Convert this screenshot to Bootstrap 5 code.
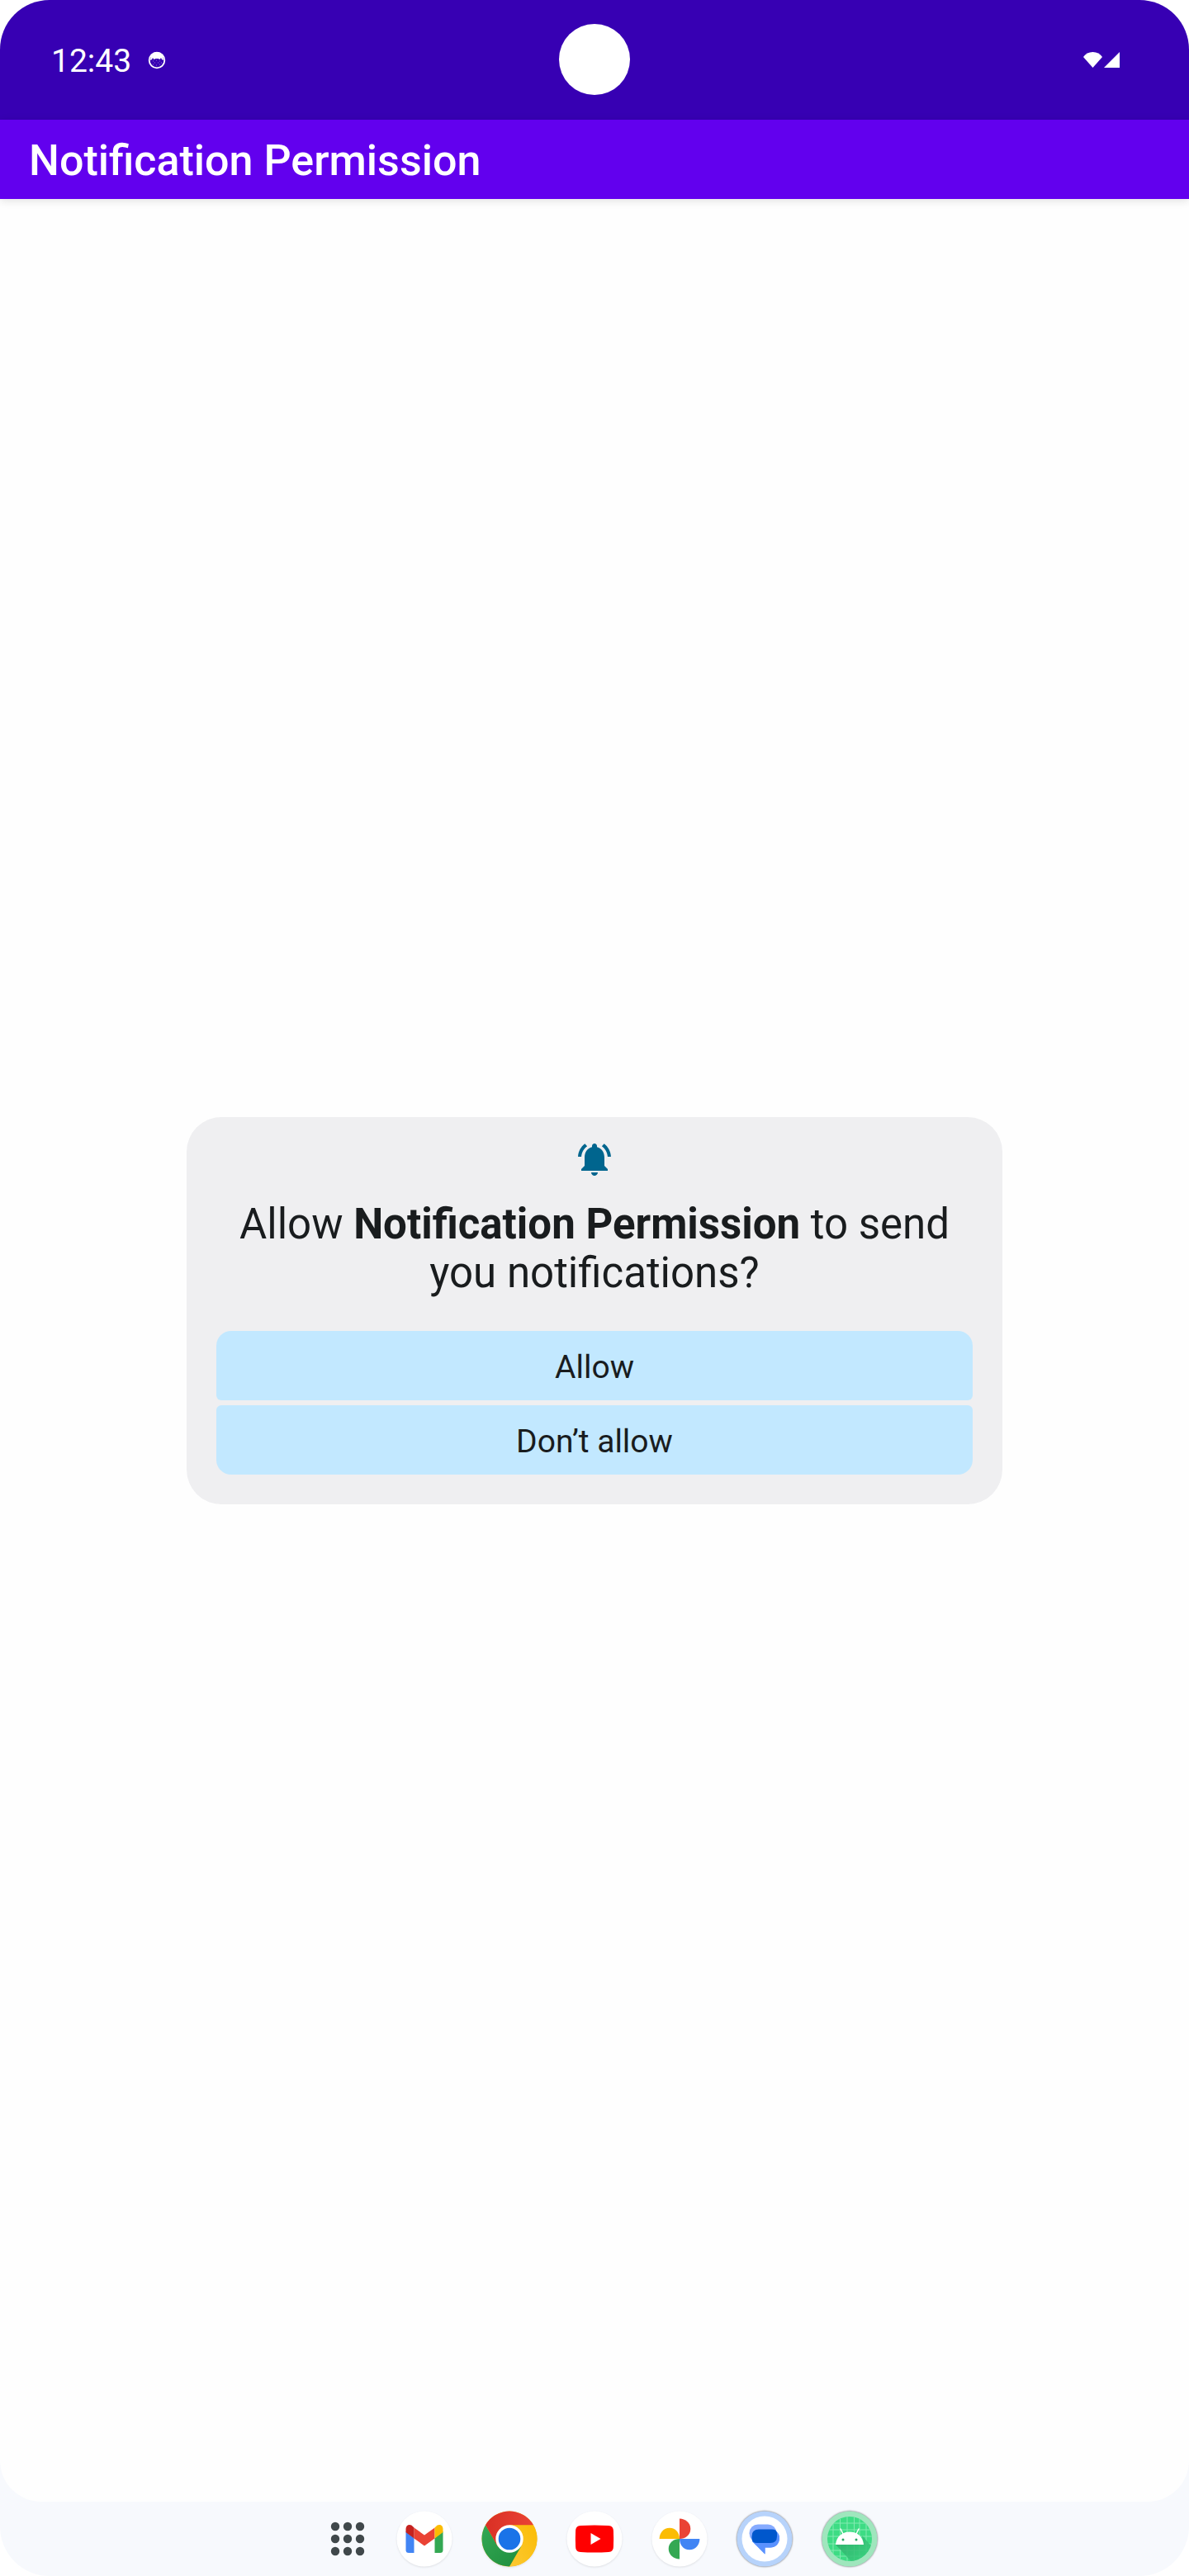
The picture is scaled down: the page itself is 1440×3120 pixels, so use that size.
<!DOCTYPE html>
<html lang="en">
<head>
<meta charset="utf-8">
<meta name="viewport" content="width=device-width, initial-scale=1">
<title>Notification Permission</title>
<link href="https://cdn.jsdelivr.net/npm/bootstrap@5.3.0/dist/css/bootstrap.min.css" rel="stylesheet">
<style>
body { font-family: Roboto, "Noto Sans", sans-serif; background: #fff; }
.device { background: #f7f9fd; border-radius: 60px; overflow: hidden; }
.status-bar { background: #3700b3; height: 145px; padding: 0 82px 0 62px; font-size: 39px; line-height: 48px; }
.status-bar time { padding-top: 3px; }
.camera { width: 86px; height: 86px; top: 29px; }
.app-window { background: #fefefe; border-radius: 0 0 50px 50px; }
.app-bar { background: #6200ee; height: 96px; padding: 4px 35px 0; box-shadow: 0 2px 10px rgba(0, 0, 0, .12); }
.app-title { font-size: 52px; line-height: 60px; font-weight: 500; }
.permission { width: 100%; max-width: 988px; padding: 27px 36px 36px; border-radius: 42px; background: #efeff1; color: #191c1e; }
.question { font-size: 51px; line-height: 59px; margin: 25px 0 41px; font-weight: 400; }
.choices { gap: 6px; }
.btn-choice { --bs-btn-color: #191c1e; --bs-btn-bg: #c2e8ff; --bs-btn-hover-bg: #b1ddf7; --bs-btn-border-width: 0; height: 84px; padding: 3px 0 0; font-size: 39px; line-height: 48px; border-radius: 6px; }
.btn-choice:first-child { border-radius: 18px 18px 6px 6px; }
.btn-choice:last-child { border-radius: 6px 6px 18px 18px; }
.dock { height: 90px; gap: 35px; }
.dock svg { display: block; overflow: visible; }
.disc { filter: drop-shadow(0 1px 1px rgba(0, 0, 0, .1)); }
.ring { filter: drop-shadow(0 0 1px rgba(0, 0, 0, .6)); }
</style>
</head>
<body>
<div class="device min-vh-100 d-flex flex-column">
  <header class="status-bar position-relative d-flex align-items-center justify-content-between text-white">
    <div class="d-flex align-items-center gap-3">
      <time datetime="12:43">12:43</time>
      <svg width="30" height="24" viewBox="0 0 30 24" aria-hidden="true">
        <circle cx="15" cy="12" r="9.3" fill="none" stroke="#fff" stroke-width="1.8"/>
        <path d="M7.500 7Q10 2 15 2t7.500 5l.5 5-2-1-1-2-1.500 2-2-1h-3l-2 1L10 9l-1 2-2 1z" fill="#fff"/>
        <path d="M10 13h1M14 12h1M18 13h1M12 15h1M16 15h1M20 15h1M10 17h1M14 18h1M18 17h1" stroke="#8e70d5" stroke-width="1"/>
      </svg>
    </div>
    <div class="camera position-absolute start-50 translate-middle-x rounded-circle bg-white"></div>
    <svg width="46" height="20" viewBox="0 0 46 20" fill="#fff" role="img" aria-label="Wi-Fi and signal">
      <path d="M0 6Q4 0 11.500 0T23 6L11.500 19z"/>
      <path d="M44 0v19H25z"/>
    </svg>
  </header>
  <main class="app-window position-relative flex-grow-1">
    <div class="app-bar d-flex align-items-center text-white">
      <h1 class="app-title m-0">Notification Permission</h1>
    </div>
    <div class="position-absolute top-0 start-0 w-100 h-100 d-flex align-items-center justify-content-center">
      <section class="permission text-center" role="dialog" aria-labelledby="question">
        <svg class="d-block mx-auto" width="48" height="48" viewBox="0 0 24 24" fill="#00658e" aria-hidden="true">
          <path d="M7.580 4.080L6.150 2.650C3.750 4.480 2.170 7.300 2.030 10.500h2c.15-2.650 1.510-4.970 3.550-6.420zM19.970 10.500h2c-.15-3.200-1.730-6.020-4.120-7.850l-1.420 1.430c2.020 1.450 3.390 3.770 3.540 6.420zM18 11c0-3.070-1.640-5.640-4.500-6.320V4c0-.83-.67-1.500-1.500-1.500s-1.500.67-1.500 1.500v.68C7.630 5.360 6 7.920 6 11v5l-2 2v1h16v-1l-2-2zM12 22c.14 0 .27-.01.4-.04.65-.14 1.180-.58 1.440-1.180.1-.24.15-.5.15-.78h-4c.01 1.100.9 2 2.010 2z"/>
        </svg>
        <h2 class="question" id="question">Allow <b class="fw-bold">Notification Permission</b> to send you notifications?</h2>
        <div class="choices d-flex flex-column">
          <button type="button" class="btn btn-choice w-100">Allow</button>
          <button type="button" class="btn btn-choice w-100">Don’t allow</button>
        </div>
      </section>
    </div>
  </main>
  <nav class="dock d-flex align-items-center justify-content-center" aria-label="Dock">
    <a href="#" aria-label="All apps">
      <svg width="68" height="68" viewBox="-34 -34 68 68" fill="#40484b">
        <g transform="translate(10 0)">
          <circle cx="-15" cy="-15" r="5.200"/><circle cy="-15" r="5.200"/><circle cx="15" cy="-15" r="5.200"/>
          <circle cx="-15" r="5.200"/><circle r="5.200"/><circle cx="15" r="5.200"/>
          <circle cx="-15" cy="15" r="5.200"/><circle cy="15" r="5.200"/><circle cx="15" cy="15" r="5.200"/>
        </g>
      </svg>
    </a>
    <a href="#" aria-label="Gmail">
      <svg width="68" height="68" viewBox="-34 -34 68 68">
        <circle class="disc" r="33.500" fill="#fff"/>
        <path fill="#4285f4" d="M-22.500-9L-12.500-1V17H-19Q-22.500 17-22.500 13.500z"/>
        <path fill="#34a853" d="M22.500-9L12.500-1V17H19Q22.500 17 22.500 13.500z"/>
        <path fill="#ea4335" d="M-12.500-13.500L0-4.500 12.500-13.500V-.5L0 8.500-12.500-.5z"/>
        <path fill="#c5221f" d="M-22.500-12C-22.500-17-17-19-13.500-14.500L-12.500-13.500V-.5L-22.500-8z"/>
        <path fill="#fbbc04" d="M22.500-12C22.500-17 17-19 13.500-14.500L12.500-13.500V-.5L22.500-8z"/>
      </svg>
    </a>
    <a href="#" aria-label="Chrome">
      <svg width="68" height="68" viewBox="-34 -34 68 68">
        <defs>
          <linearGradient id="cr"><stop stop-color="#d93025"/><stop offset="1" stop-color="#ea4335"/></linearGradient>
          <linearGradient id="cg" x1="1" y1="1" x2="0" y2="0"><stop stop-color="#1e8e3e"/><stop offset="1" stop-color="#34a853"/></linearGradient>
          <linearGradient id="cy" x1="0" y1="1" x2="1" y2="0"><stop stop-color="#fcc934"/><stop offset="1" stop-color="#fbbc04"/></linearGradient>
        </defs>
        <circle class="disc" r="33.500" fill="#fbbc04"/>
        <path fill="url(#cy)" d="M0-16.700H29A33.500 33.500 0 0 1 0 33.500L14.500 8.400z"/>
        <path fill="url(#cg)" d="M0 33.500A33.500 33.500 0 0 1-29-16.700L-14.500 8.400 0 16 14.500 8.400z"/>
        <path fill="url(#cr)" d="M-29-16.700A33.500 33.500 0 0 1 29-16.700H0L-14.500 8.400z"/>
        <circle r="16.700" fill="#fff"/><circle r="13.300" fill="#1a73e8"/>
      </svg>
    </a>
    <a href="#" aria-label="YouTube">
      <svg width="68" height="68" viewBox="-34 -34 68 68">
        <circle class="disc" r="33.500" fill="#fff"/>
        <path fill="#f00" d="M-17-16Q0-17 17-16C21-15.500 22.500-14 22.900-10Q23.400 0 22.900 10C22.500 14 21 15.500 17 16Q0 17-17 16C-21 15.500-22.500 14-22.900 10Q-23.400 0-22.900-10C-22.500-14-21-15.500-17-16z"/>
        <path fill="#fff" d="M-4.500-7L7.500 0-4.500 7z"/>
      </svg>
    </a>
    <a href="#" aria-label="Photos">
      <svg width="68" height="68" viewBox="-34 -34 68 68">
        <circle class="disc" r="33.500" fill="#fff"/>
        <path fill="#ea4335" d="M0 0V-24.400C7-24.400 13.300-19.500 13.300-12S7 0 0 0z"/>
        <path fill="#4285f4" d="M0 0H24.400C24.400 7 19.500 13.300 12 13.300S0 7 0 0z"/>
        <path fill="#34a853" d="M0 0V24.400C-7 24.400-13.300 19.500-13.300 12S-7 0 0 0z"/>
        <path fill="#fbbc04" d="M0 0H-24.400C-24.400-7-19.500-13.300-12-13.300S0-7 0 0z"/>
      </svg>
    </a>
    <a href="#" aria-label="Messages">
      <svg width="68" height="68" viewBox="-34 -34 68 68">
        <circle class="ring" r="33.500" fill="#b7d3fb"/><circle r="27.500" fill="#fff"/>
        <path fill="#5a92ff" d="M-15 3H10L14.500-9Q18-6 18-1C18 6 13 10.500 7 10.500H.5V18.500z"/>
        <rect x="-18.500" y="-17.500" width="33" height="21.500" rx="10.500" fill="#86abff"/>
        <path fill="#5a92ff" d="M-15 3L-12-6 10-10 14.500-8Q18-5 18-1C18 6 13 10.500 7 10.500H.5V18.500z"/>
        <path fill="#0057cc" d="M-7-11.500H9Q15-11.500 15-6.500V-3Q15 5 7 5H-9Q-15.500 5-15.500-1V-3Q-15.500-11.500-7-11.500z"/>
      </svg>
    </a>
    <a href="#" aria-label="Notification Permission">
      <svg width="68" height="68" viewBox="-34 -34 68 68">
        <clipPath id="face"><circle r="27"/></clipPath>
        <linearGradient id="sh" x1="0" y1="0" x2="1" y2="1"><stop stop-color="#2aa565"/><stop offset="1" stop-color="#3ddc84"/></linearGradient>
        <circle class="ring" r="33.500" fill="#9fe6bd"/><circle r="27" fill="#3ddc84"/>
        <g clip-path="url(#face)">
          <path stroke="#83eab1" stroke-width="1" d="M-20-28V28M-11.500-28V28M-3-28V28M5.500-28V28M12-28V28M20-28V28M-28-19H28M-28-11H28M-28-3H28M-28 6H28M-28 14H28M-28 21H28" fill="none"/>
          <path fill="url(#sh)" opacity=".85" d="M-17 7H17L15-4 32 15V34H8z"/>
        </g>
        <path fill="#fff" d="M-17 7C-16-3-9-8.500 0-8.500S16-3 17 7z"/>
        <path stroke="#fff" stroke-width="1.500" stroke-linecap="round" d="M-8-6L-11-12M8-6L11-12"/>
        <circle cx="-8" cy="1" r="1.500" fill="#2aa565"/><circle cx="8" cy="1" r="1.500" fill="#2aa565"/>
      </svg>
    </a>
  </nav>
</div>
<script src="https://cdn.jsdelivr.net/npm/bootstrap@5.3.0/dist/js/bootstrap.bundle.min.js"></script>
</body>
</html>
